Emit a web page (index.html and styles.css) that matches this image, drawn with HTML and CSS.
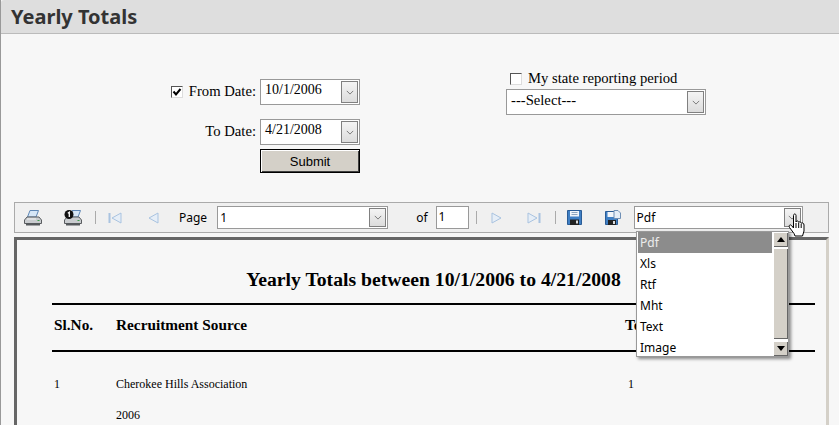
FILE: index.html
```html
<!DOCTYPE html>
<html lang="en">
<head>
<meta charset="utf-8">
<title>Yearly Totals</title>
<link rel="stylesheet" href="styles.css">
</head>
<body>
<header class="title-bar"><h1>Yearly Totals</h1></header>
<main class="content">
  <form class="filters">
    <div class="dates">
      <div class="date-row">
        <span class="check checked"><svg viewBox="0 0 10 10" width="10" height="10"><path d="M1.500 4.500 4 7.500 8.500 2" fill="none" stroke="#000" stroke-width="2"/></svg></span>
        <label class="date-label">From Date:</label>
        <div class="combo"><span class="combo-text">10/1/2006</span><span class="arrow"><svg viewBox="0 0 10 6" width="8" height="5"><path d="M1 1 5 5 9 1" fill="none" stroke="#777" stroke-width="1.2"/></svg></span></div>
      </div>
      <div class="date-row">
        <label class="date-label">To Date:</label>
        <div class="combo"><span class="combo-text">4/21/2008</span><span class="arrow"><svg viewBox="0 0 10 6" width="8" height="5"><path d="M1 1 5 5 9 1" fill="none" stroke="#777" stroke-width="1.2"/></svg></span></div>
      </div>
      <button class="submit" type="button">Submit</button>
    </div>
    <div class="state">
      <div class="state-row"><span class="check"></span><label class="state-label">My state reporting period</label></div>
      <div class="combo state-combo"><span class="combo-text">---Select---</span><span class="arrow"><svg viewBox="0 0 10 6" width="8" height="5"><path d="M1 1 5 5 9 1" fill="none" stroke="#777" stroke-width="1.2"/></svg></span></div>
    </div>
  </form>

  <div class="toolbar">
    <svg class="tool print-icon" viewBox="0 0 18 16" width="18" height="16"><path d="M6 .5h8.500L12 7H3.500z" fill="#d6e6f6" stroke="#5f87b5"/><path d="M3 7h12l2.500 3v3.500H.5V10z" fill="#c9cccf" stroke="#5a5d60"/><path d="M2 13h14v2.500H2z" fill="#55595c"/><path d="M3 9h9" stroke="#f4f4f4"/><path d="M13.500 10.500h2" stroke="#3c9a4a"/></svg>
    <svg class="tool print-one" viewBox="0 0 18 16" width="18" height="16"><path d="M8 .5h8.500L14 7H5.500z" fill="#d6e6f6" stroke="#5f87b5"/><path d="M3 7h12l2.500 3v3.500H.5V10z" fill="#c9cccf" stroke="#5a5d60"/><path d="M2 13h14v2.500H2z" fill="#55595c"/><path d="M13.500 10.500h2" stroke="#3c9a4a"/><circle cx="5" cy="4.500" r="4.500" fill="#111"/><path d="M3.800 3.300 5.300 2.300V7" fill="none" stroke="#fff" stroke-width="1.3"/></svg>
    <span class="sep sep-a"></span>
    <svg class="tool first" viewBox="0 0 14 12" width="14" height="12"><path d="M1.500 1v10" stroke="#a9c3e0" stroke-width="2"/><path d="M13 1v10L4 6z" fill="#e6eef7" stroke="#a9c3e0"/></svg>
    <svg class="tool prev" viewBox="0 0 11 12" width="11" height="12"><path d="M10 1v10L1 6z" fill="#e6eef7" stroke="#a9c3e0"/></svg>
    <span class="tb-label page-label">Page</span>
    <div class="combo page-combo"><span class="combo-text">1</span><span class="arrow"><svg viewBox="0 0 10 6" width="8" height="5"><path d="M1 1 5 5 9 1" fill="none" stroke="#777" stroke-width="1.2"/></svg></span></div>
    <span class="tb-label of-label">of</span>
    <div class="page-count">1</div>
    <span class="sep sep-b"></span>
    <svg class="tool next" viewBox="0 0 11 12" width="11" height="12"><path d="M1 1v10l9-5z" fill="#e6eef7" stroke="#a9c3e0"/></svg>
    <svg class="tool last" viewBox="0 0 14 12" width="14" height="12"><path d="M1 1v10l9-5z" fill="#e6eef7" stroke="#a9c3e0"/><path d="M12.500 1v10" stroke="#a9c3e0" stroke-width="2"/></svg>
    <span class="sep sep-c"></span>
    <svg class="tool save" viewBox="0 0 15 15" width="15" height="15"><path d="M.5.5h14v14H.5z" fill="#3f7fc4" stroke="#2a5c96"/><path d="M3 1h9v5.500H3z" fill="#f1f5fa"/><path d="M4.500 2.500h6M4.500 4.500h6" stroke="#8fa6bf"/><path d="M3 9.500h9V15H3z" fill="#222"/><path d="M9 10.500h2v3H9z" fill="#ddd"/></svg>
    <svg class="tool save-as" viewBox="0 0 16 15" width="16" height="15"><path d="M.5 1.500h12v13H.5z" fill="#3f7fc4" stroke="#2a5c96"/><path d="M2.500 2h7v5h-7z" fill="#f1f5fa"/><path d="M9 .5h4l2.500 2.500v5.500H9z" fill="#e4edf7" stroke="#6f8fb5"/><path d="M3 10h8v5H3z" fill="#222"/><path d="M8 11h2v3H8z" fill="#ddd"/></svg>
    <div class="combo format-combo"><span class="combo-text">Pdf</span><span class="arrow"><svg viewBox="0 0 10 6" width="8" height="5"><path d="M1 1 5 5 9 1" fill="none" stroke="#777" stroke-width="1.2"/></svg></span></div>
  </div>

  <section class="report">
    <h2>Yearly Totals between 10/1/2006 to 4/21/2008</h2>
    <div class="report-head">
      <span class="col-no">Sl.No.</span>
      <span class="col-source">Recruitment Source</span>
      <span class="col-total">Total</span>
    </div>
    <div class="report-row">
      <span class="col-no">1</span>
      <span class="col-source">Cherokee Hills Association</span>
      <span class="col-total">1</span>
    </div>
    <div class="report-row year-row"><span class="col-no"></span><span class="col-source">2006</span></div>
  </section>
</main>

<ul class="dropdown">
  <li class="selected">Pdf</li><li>Xls</li><li>Rtf</li><li>Mht</li><li>Text</li><li>Image</li>
  <li class="scroll" aria-hidden="true">
    <span class="scroll-btn"><svg viewBox="0 0 8 5" width="8" height="5"><path d="M0 5 4 0 8 5z"/></svg></span>
    <span class="scroll-thumb"></span>
    <span class="scroll-btn"><svg viewBox="0 0 8 5" width="8" height="5"><path d="M0 0 4 5 8 0z"/></svg></span>
  </li>
</ul>
<svg class="cursor" viewBox="0 0 18 24" width="18" height="24"><path d="M5.500 2.500c0-2 2.500-2 2.500 0V9c.5-1.500 2.500-1.500 2.700.5.500-1 2.300-1 2.500.8.700-.8 2.800-.5 2.800 1.700v6l-1.500 5H7L6 20.500 1.500 14.500C.5 12.500 2 11 3.500 12.500l2 2.500z" fill="#fff" stroke="#000"/><path d="M8 10v5M10.700 10v5M13.200 11v4" stroke="#000"/></svg>
</body>
</html>
```
FILE: styles.css
```css
* { box-sizing: border-box; }
html, body { margin: 0; padding: 0; }
html { overflow: hidden; }
body {
  width: 839px;
  height: 425px;
  overflow: hidden;
  position: relative;
  background: #f7f7f7;
  border-left: 1px solid #999;
  font-family: "Liberation Serif", serif;
  color: #000;
}
.title-bar {
  height: 34px;
  background: #dedede;
  border-bottom: 1px solid #bbb;
  border-top-left-radius: 3px;
  padding-left: 10px;
}
.title-bar h1 {
  margin: 0;
  font: 700 20px/33px "Noto Sans", sans-serif;
  color: #333;
}
.content { padding: 0 9px 0 13px; }
.filters { display: flex; height: 168px; }
.dates {
  width: 346px;
  padding-top: 45px;
  display: flex;
  flex-direction: column;
  align-items: flex-end;
}
.date-row {
  display: flex;
  align-items: center;
  height: 26px;
  margin-bottom: 14px;
  font-size: 14.67px;
}
.date-row:nth-child(2) { margin-bottom: 4px; }
.check {
  width: 12px;
  height: 12px;
  background: #fff;
  border: 1px solid;
  border-color: #555 #ddd #ddd #555;
  display: flex;
  align-items: center;
  justify-content: center;
  flex: none;
}
.date-row .check { margin-right: 6px; }
.date-label { margin-right: 4px; padding-bottom: 2px; }
.combo {
  display: flex;
  justify-content: space-between;
  align-items: center;
  width: 100px;
  height: 26px;
  background: #fff;
  border: 1px solid #999;
  padding: 1px 1px 1px 4px;
  font-size: 14px;
}
.combo-text { padding-bottom: 4px; }
.arrow {
  width: 17px;
  height: 22px;
  display: flex;
  align-items: center;
  justify-content: center;
  background: linear-gradient(#f4f4f4, #dcdcdc);
  border: 1px solid #808080;
}
.submit {
  width: 100px;
  height: 24px;
  padding: 0;
  background: #d4d0c8;
  border: 1px solid #000;
  box-shadow: inset 1px 1px 0 #fff, inset -1px -1px 0 #404040;
  font: 13px "Liberation Sans", sans-serif;
  color: #000;
}
.state { margin-left: 146px; padding-top: 37px; }
.state-row {
  display: flex;
  align-items: center;
  height: 16px;
  margin-bottom: 2px;
  padding-left: 4px;
  font-size: 14.67px;
  white-space: nowrap;
}
.state-row .check { margin-right: 6px; }
.state-label { padding-bottom: 2px; }
.state-combo { width: 200px; font-size: 14.67px; }
.toolbar {
  width: 815px;
  height: 31px;
  background: #f0f0f0;
  border: 1px solid #aaa;
  display: flex;
  align-items: center;
  font: 12px "Noto Sans", sans-serif;
}
.tool { flex: none; }
.print-icon { margin-left: 9px; }
.print-one { margin-left: 22px; }
.sep { width: 1px; height: 13px; background: #aaa; flex: none; }
.sep-a { margin-left: 13px; }
.first { margin-left: 12px; }
.prev { margin-left: 26px; }
.page-label { margin-left: 20px; }
.page-combo, .format-combo { height: 23px; padding-left: 2px; font: 12px "Noto Sans", sans-serif; }
.page-combo { width: 171px; margin-left: 10px; }
.page-combo .arrow, .format-combo .arrow { height: 19px; }
.page-combo .combo-text, .format-combo .combo-text { padding-bottom: 1px; }
.of-label { margin-left: 28px; }
.page-count {
  width: 33px;
  height: 23px;
  margin-left: 8px;
  background: #fff;
  border: 1px solid #999;
  padding: 0 2px;
  line-height: 20px;
}
.sep-b { margin-left: 7px; }
.next { margin-left: 14px; }
.last { margin-left: 25px; }
.sep-c { margin-left: 14px; }
.save { margin-left: 11px; }
.save-as { margin-left: 23px; }
.format-combo { width: 169px; margin-left: 13px; }
.report {
  width: 815px;
  height: 188px;
  margin-top: 4px;
  background: #f7f7f7;
  border: 3px solid;
  border-bottom: 0;
  border-color: #666 #d4d0c8 #d4d0c8 #666;
  padding-left: 35px;
}
.report h2 {
  width: 763px;
  margin: 0;
  padding-top: 27px;
  height: 65px;
  text-align: center;
  font: 700 19.7px/24px "Liberation Serif", serif;
  border-bottom: 2px solid #000;
}
.report-head {
  width: 763px;
  height: 47px;
  padding-bottom: 6px;
  display: flex;
  align-items: center;
  font-weight: 700;
  font-size: 15.3px;
  border-bottom: 2px solid #000;
}
.report-row {
  width: 763px;
  height: 31px;
  display: flex;
  align-items: center;
  font-size: 12px;
}
.report-head + .report-row { margin-top: 17px; }
.col-no { width: 64px; padding-left: 2px; flex: none; }
.col-source { width: 509px; flex: none; }
.report-row .col-total { padding-left: 3px; }
.dropdown {
  position: absolute;
  left: 635px;
  top: 231px;
  width: 153px;
  height: 126px;
  margin: 0;
  padding: 0 16px 0 1px;
  list-style: none;
  background: #fff;
  border: 1px solid #999;
  box-shadow: 2px 2px 3px rgba(0,0,0,.45);
  font: 12px/21px "Noto Sans", sans-serif;
}
.dropdown li { padding-left: 2px; height: 21px; }
.dropdown .selected { background: #8c8c8c; color: #ececec; }
.dropdown .scroll {
  position: absolute;
  top: 0;
  right: 0;
  width: 15px;
  height: 124px;
  padding: 0;
  display: flex;
  flex-direction: column;
}
.scroll-btn, .scroll-thumb {
  background: #d4d0c8;
  box-shadow: inset 1px 1px 0 #fff, inset -1px -1px 0 #666;
  display: flex;
  align-items: center;
  justify-content: center;
}
.scroll-btn { height: 15px; flex: none; }
.scroll-thumb { flex: 1; margin: 1px 0 2px; }
.cursor { position: absolute; left: 787px; top: 213px; }
```
